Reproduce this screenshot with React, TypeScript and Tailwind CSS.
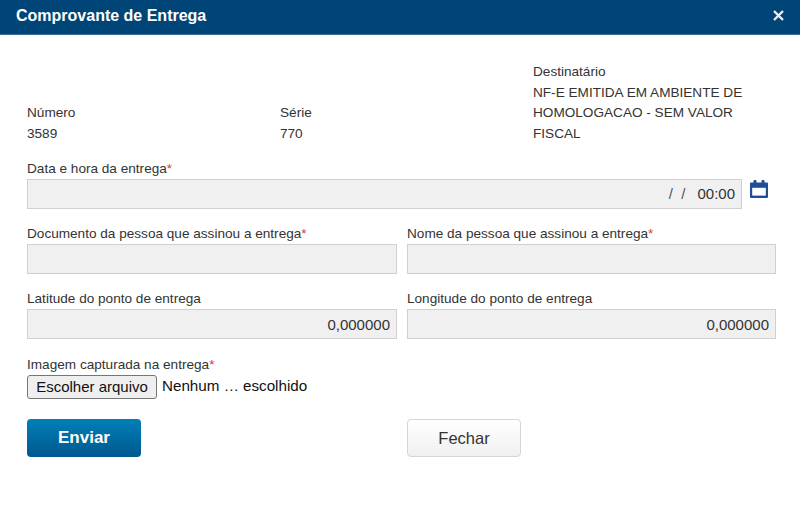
import React from 'react';

const Req = () => <span className="text-[#e0392b]">*</span>;

const Field: React.FC<{ label: string; required?: boolean; value?: string }> = ({ label, required, value }) => (
  <div>
    <label className="block h-[20px] leading-[20px]">
      {label}
      {required && <Req />}
    </label>
    <input
      readOnly
      value={value ?? ''}
      className="block w-full h-[30px] border border-[#d0d0d0] bg-[#f0f0f0] px-[6px] text-right text-[15px] text-[#333] outline-none"
    />
  </div>
);

export default function App() {
  return (
    <div className="h-[511px] w-[800px] overflow-hidden bg-white text-[13.6px] text-[#333] font-['Liberation_Sans',Arial,sans-serif]">
      {/* Header */}
      <header className="flex h-[35px] items-center justify-between border-b border-[#3a6c93] bg-[#004577] pb-[2px] pl-[16px] pr-[16px] text-white">
        <h1 className="text-[16px] font-bold">Comprovante de Entrega</h1>
        <svg width="11" height="11" viewBox="0 0 11 11" stroke="#e8eef3" strokeWidth="2.4" className="mb-[1px]">
          <path d="M1 1l9 9M10 1L1 10" />
        </svg>
      </header>

      <main className="pl-[27px] pr-[24px] pt-[27px]">
        {/* Dados da nota */}
        <div className="grid grid-cols-[253px_253px_1fr] items-end leading-[20.5px]">
          <div>
            <div>Número</div>
            <div>3589</div>
          </div>
          <div>
            <div>Série</div>
            <div>770</div>
          </div>
          <div>
            <div>Destinatário</div>
            <div className="w-[225px]">NF-E EMITIDA EM AMBIENTE DE HOMOLOGACAO - SEM VALOR FISCAL</div>
          </div>
        </div>

        {/* Data e hora */}
        <div className="mt-[15px]">
          <label className="block h-[20px] leading-[20px]">
            Data e hora da entrega
            <Req />
          </label>
          <div className="flex items-start gap-[8px]">
            <div className="flex h-[30px] w-[715px] items-center justify-end border border-[#d0d0d0] bg-[#f0f0f0] pr-[6px] text-[15px]">
              <span className="mr-[12px] text-[#555]">/&nbsp;&nbsp;/</span>
              <span>00:00</span>
            </div>
            <svg width="18" height="18" viewBox="0 0 18 18" className="mt-[1px] text-[#1f4e96]" fill="currentColor">
              <path d="M1 2.5h2.5V1a1 1 0 0 1 1-1h1a1 1 0 0 1 1 1v1.5h5V1a1 1 0 0 1 1-1h1a1 1 0 0 1 1 1v1.5H17a1 1 0 0 1 1 1V17a1 1 0 0 1-1 1H1a1 1 0 0 1-1-1V3.5a1 1 0 0 1 1-1z" />
              <rect x="2.2" y="7.8" width="13.6" height="7.8" fill="#fff" />
            </svg>
          </div>
        </div>

        <div className="mt-[15px] grid grid-cols-[370px_369px] gap-x-[10px]">
          <Field label="Documento da pessoa que assinou a entrega" required />
          <Field label="Nome da pessoa que assinou a entrega" required />
        </div>

        <div className="mt-[15px] grid grid-cols-[370px_369px] gap-x-[10px]">
          <Field label="Latitude do ponto de entrega" value="0,000000" />
          <Field label="Longitude do ponto de entrega" value="0,000000" />
        </div>

        {/* Imagem */}
        <div className="mt-[16px]">
          <label className="block h-[20px] leading-[20px]">
            Imagem capturada na entrega
            <Req />
          </label>
          <div className="flex items-center text-[15px] text-[#111]">
            <button className="h-[24px] w-[130px] rounded-[3px] border border-[#767676] bg-[#efefef] pb-[1px]">Escolher arquivo</button>
            <span className="mb-[1px] ml-[5px] text-[15.2px]">Nenhum … escolhido</span>
          </div>
        </div>

        {/* Botoes */}
        <div className="mt-[20px] grid grid-cols-[370px_369px] gap-x-[10px]">
          <button className="h-[38px] w-[114px] rounded-[4px] bg-gradient-to-b from-[#0080b8] to-[#00588f] text-[17px] font-bold text-white">
            Enviar
          </button>
          <button className="h-[38px] w-[114px] rounded-[4px] border border-[#d5d5d5] bg-gradient-to-b from-white to-[#f0f0f0] text-[16.5px] text-[#333]">
            Fechar
          </button>
        </div>
      </main>
    </div>
  );
}
